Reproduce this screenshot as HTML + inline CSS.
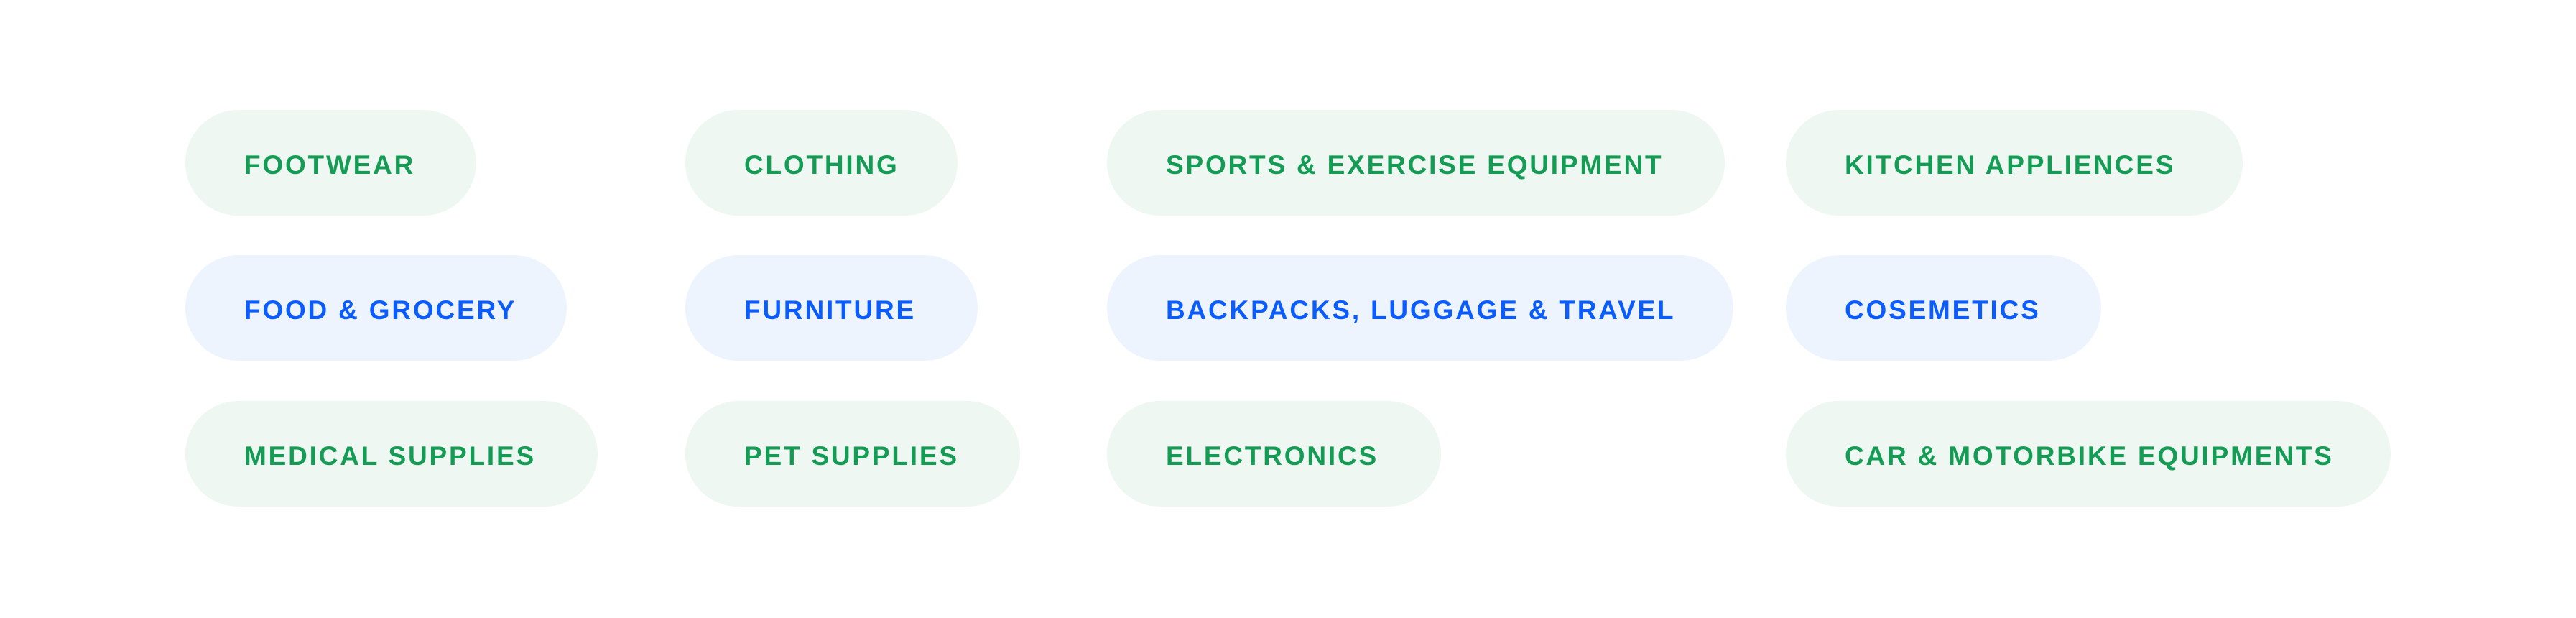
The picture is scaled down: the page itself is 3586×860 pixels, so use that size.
<!DOCTYPE html>
<html><head><meta charset="utf-8"><style>
html,body{margin:0;padding:0;background:#fff;}
body{width:3586px;height:860px;position:relative;overflow:hidden;font-family:"Liberation Sans",sans-serif;}
.p{position:absolute;height:147px;border-radius:74px;box-sizing:border-box;padding-left:82px;line-height:153px;font-size:37px;font-weight:bold;letter-spacing:2.8px;white-space:nowrap;}
.g{background:#eef7f2;color:#149c55;}
.b{background:#eef4fd;color:#0a5cff;}
</style></head><body>
<div class="p g" style="left:258px;top:153px;width:405px">FOOTWEAR</div>
<div class="p g" style="left:954px;top:153px;width:379px">CLOTHING</div>
<div class="p g" style="left:1541px;top:153px;width:860px">SPORTS &amp; EXERCISE EQUIPMENT</div>
<div class="p g" style="left:2486px;top:153px;width:636px">KITCHEN APPLIENCES</div>
<div class="p b" style="left:258px;top:355px;width:531px">FOOD &amp; GROCERY</div>
<div class="p b" style="left:954px;top:355px;width:407px">FURNITURE</div>
<div class="p b" style="left:1541px;top:355px;width:872px">BACKPACKS, LUGGAGE &amp; TRAVEL</div>
<div class="p b" style="left:2486px;top:355px;width:439px">COSEMETICS</div>
<div class="p g" style="left:258px;top:558px;width:574px">MEDICAL SUPPLIES</div>
<div class="p g" style="left:954px;top:558px;width:466px">PET SUPPLIES</div>
<div class="p g" style="left:1541px;top:558px;width:465px">ELECTRONICS</div>
<div class="p g" style="left:2486px;top:558px;width:842px">CAR &amp; MOTORBIKE EQUIPMENTS</div>
</body></html>
